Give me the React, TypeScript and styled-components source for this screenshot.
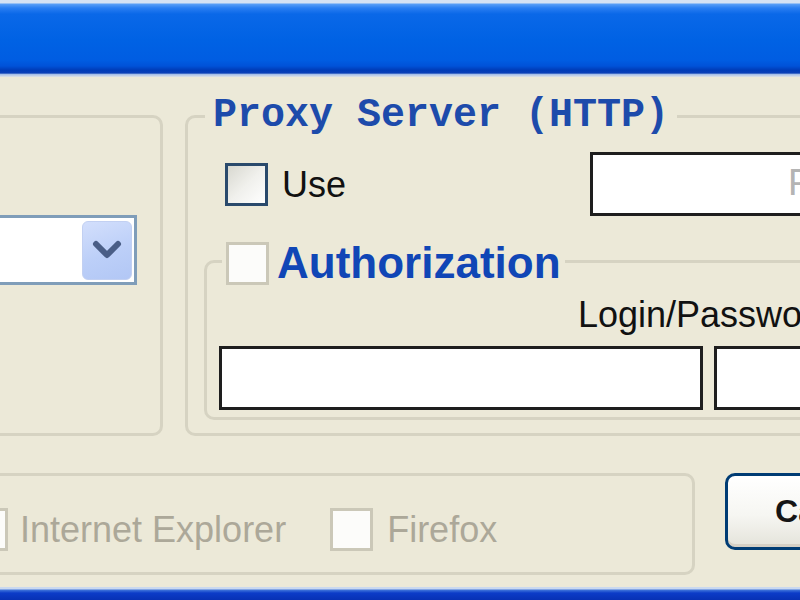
import React from "react";
import styled, { createGlobalStyle } from "styled-components";

const GlobalStyle = createGlobalStyle`
  html, body { margin: 0; padding: 0; overflow: hidden; background: #ece9d8; }
  body { font-family: "Liberation Sans", Arial, sans-serif; }
  * { box-sizing: border-box; }
`;

const Window = styled.div`
  width: 1200px;
  height: 600px;
  margin-left: -200px;
  display: flex;
  flex-direction: column;
`;

const TitleBar = styled.div`
  flex: 0 0 77px;
  background: linear-gradient(
    180deg,
    #d6e2f4 0px,
    #d6e2f4 3px,
    #5a9ff7 4px,
    #2a7ef2 8px,
    #0a68e8 14px,
    #0062e4 40px,
    #005de2 60px,
    #0052d8 66px,
    #003cb8 70px,
    #0a3fb6 73px,
    #a8c0e8 74.5px,
    #dfe3e6 77px
  );
`;

const Body = styled.div`
  flex: 1;
  background: #ece9d8;
  padding: 38px 0 12px 10px;
  display: flex;
  flex-direction: column;
`;

const TopRow = styled.div`
  display: flex;
  gap: 22px;
  align-items: stretch;
`;

const GroupBox = styled.div<{ $width: number }>`
  position: relative;
  flex-shrink: 0;
  width: ${(p) => p.$width}px;
  border: 3px solid #d6d3c2;
  border-radius: 10px;
`;

const LeftGroup = styled(GroupBox)`
  display: flex;
  flex-direction: column;
  align-items: flex-end;
  padding: 97px 23px 0 0;
`;

const Combo = styled.div`
  width: 300px;
  height: 70px;
  border: 3px solid #7f9db9;
  background: #fff;
  display: flex;
  justify-content: flex-end;
  align-items: center;
  padding-right: 2px;
`;

const ComboButton = styled.div`
  width: 50px;
  height: 59px;
  border-radius: 6px;
  border: 1px solid #c2d0f2;
  background: linear-gradient(160deg, #d3dffc 0%, #bccff8 55%, #b2c7f5 100%);
  display: flex;
  align-items: center;
  justify-content: center;
`;

const RightGroup = styled(GroupBox)`
  display: flex;
  flex-direction: column;
  padding: 34px 0 13px 0;
`;

const ProxyLegend = styled.div`
  position: absolute;
  top: -22px;
  left: 17px;
  padding: 0 8px;
  background: #ece9d8;
  font-family: "Liberation Mono", "Courier New", monospace;
  font-weight: bold;
  font-size: 40px;
  line-height: 40px;
  color: #1d4bab;
  white-space: pre;
`;

const UseRow = styled.div`
  display: flex;
  align-items: center;
  padding-left: 37px;
`;

const CheckItem = styled.label<{ $gap: number }>`
  display: flex;
  align-items: center;
  gap: ${(p) => p.$gap}px;
  flex-shrink: 0;
`;

const CheckBox = styled.span<{ $disabled?: boolean }>`
  display: block;
  width: 43px;
  height: 43px;
  flex-shrink: 0;
  border: 3px solid ${(p) => (p.$disabled ? "#cbc8b8" : "#2a4a6c")};
  background: ${(p) =>
    p.$disabled
      ? "#fcfcfa"
      : "linear-gradient(135deg, #d8d8d0 0%, #f0f0ec 50%, #ffffff 100%)"};
`;

const Label = styled.span<{ $disabled?: boolean }>`
  font-size: 36px;
  line-height: 41px;
  white-space: nowrap;
  color: ${(p) => (p.$disabled ? "#aca899" : "#111")};
`;

const PortInput = styled.div`
  margin-left: 244px;
  width: 400px;
  height: 64px;
  flex-shrink: 0;
  border: 3px solid #1e1e1e;
  background: #fff;
  padding-left: 195px;
  display: flex;
  align-items: center;
  font-family: "Liberation Mono", "Courier New", monospace;
  font-size: 38px;
  color: #b4b4b4;
  white-space: nowrap;
  overflow: hidden;
`;

const AuthGroup = styled.div`
  position: relative;
  width: 700px;
  margin: 44px 0 0 16px;
  border: 3px solid #d6d3c2;
  border-radius: 10px;
  display: flex;
  flex-direction: column;
`;

const AuthLegend = styled.div`
  position: absolute;
  top: -23px;
  left: 15px;
  height: 46px;
  padding: 0 4px;
  background: #ece9d8;
  display: flex;
  align-items: center;
  gap: 8px;
`;

const AuthTitle = styled.span`
  font-weight: bold;
  font-size: 44px;
  line-height: 46px;
  color: #1046b6;
  white-space: nowrap;
`;

const LoginLabel = styled.div`
  margin: 31px 0 0 371px;
  font-size: 36px;
  line-height: 41px;
  color: #111;
  white-space: nowrap;
`;

const InputsRow = styled.div`
  display: flex;
  gap: 11px;
  padding: 11px 0 7px 12px;
`;

const TextInput = styled.div<{ $width: number }>`
  width: ${(p) => p.$width}px;
  height: 64px;
  flex-shrink: 0;
  border: 3px solid #1e1e1e;
  background: #fff;
`;

const BottomRow = styled.div`
  display: flex;
  align-items: flex-start;
  margin-top: 37px;
`;

const BrowserGroup = styled.div`
  width: 885px;
  height: 102px;
  flex-shrink: 0;
  border: 3px solid #d6d3c2;
  border-radius: 10px;
  display: flex;
  align-items: center;
  gap: 44px;
  padding: 11px 0 0 152px;
`;

const CancelButton = styled.button`
  margin-left: 30px;
  width: 205px;
  height: 77px;
  flex-shrink: 0;
  border: 3px solid #003c74;
  border-radius: 10px;
  background: linear-gradient(180deg, #ffffff 0%, #f6f6f2 55%, #e4e3da 100%);
  box-shadow: inset 0 -3px 0 #d6d0c5, inset 0 3px 0 #ffffff;
  font-family: "Liberation Sans", Arial, sans-serif;
  font-weight: bold;
  font-size: 32px;
  color: #151515;
  padding: 0;
`;

const BottomEdge = styled.div`
  flex: 0 0 13px;
  background: linear-gradient(
    180deg,
    #c9d8ef 0px,
    #c9d8ef 2px,
    #3f74da 3px,
    #0c3cc8 6px,
    #0831b4 13px
  );
`;

function Chevron() {
  return (
    <svg width="30" height="20" viewBox="0 0 30 20">
      <polyline
        points="4,4 15,15 26,4"
        fill="none"
        stroke="#4a5e86"
        strokeWidth="6"
        strokeLinecap="round"
        strokeLinejoin="round"
      />
    </svg>
  );
}

export default function App() {
  return (
    <>
      <GlobalStyle />
      <Window>
        <TitleBar />
        <Body>
          <TopRow>
            <LeftGroup $width={353}>
              <Combo>
                <ComboButton>
                  <Chevron />
                </ComboButton>
              </Combo>
            </LeftGroup>
            <RightGroup $width={750}>
              <ProxyLegend>Proxy Server (HTTP)</ProxyLegend>
              <UseRow>
                <CheckItem $gap={14}>
                  <CheckBox />
                  <Label>Use</Label>
                </CheckItem>
                <PortInput>Port</PortInput>
              </UseRow>
              <AuthGroup>
                <AuthLegend>
                  <CheckBox $disabled />
                  <AuthTitle>Authorization</AuthTitle>
                </AuthLegend>
                <LoginLabel>Login/Password</LoginLabel>
                <InputsRow>
                  <TextInput $width={484} />
                  <TextInput $width={300} />
                </InputsRow>
              </AuthGroup>
            </RightGroup>
          </TopRow>
          <BottomRow>
            <BrowserGroup>
              <CheckItem $gap={12}>
                <CheckBox $disabled />
                <Label $disabled>Internet Explorer</Label>
              </CheckItem>
              <CheckItem $gap={14}>
                <CheckBox $disabled />
                <Label $disabled>Firefox</Label>
              </CheckItem>
            </BrowserGroup>
            <CancelButton>Cancel</CancelButton>
          </BottomRow>
        </Body>
        <BottomEdge />
      </Window>
    </>
  );
}
